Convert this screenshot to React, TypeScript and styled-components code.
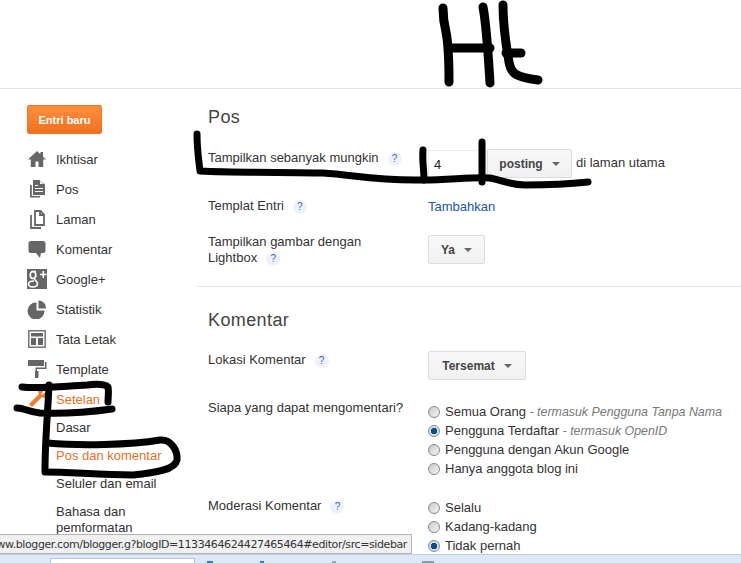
import React from 'react';
import styled, { createGlobalStyle } from 'styled-components';

const GlobalStyle = createGlobalStyle`
  html, body {
    margin: 0;
    padding: 0;
    background: #fff;
    overflow: hidden;
  }
  body {
    font-family: 'Liberation Sans', Arial, sans-serif;
    font-size: 13px;
    color: #333;
  }
`;

const Page = styled.div`
  position: relative;
  width: 741px;
  height: 563px;
  overflow: hidden;
  background: #fff;
`;

const TopBar = styled.header`
  height: 88px;
  border-bottom: 1px solid #e5e5e5;
`;

const Body = styled.div`
  display: flex;
`;

const Sidebar = styled.nav`
  width: 197px;
  flex-shrink: 0;
  padding: 16px 0 0 27px;
  box-sizing: border-box;
`;

const NewPost = styled.button`
  display: block;
  width: 75px;
  height: 29px;
  padding: 0;
  margin-bottom: 10px;
  border: 1px solid #f0762a;
  border-radius: 2px;
  background: linear-gradient(#fc8f3e, #f36f1f);
  color: #fff;
  font-family: inherit;
  font-size: 11px;
  font-weight: bold;
`;

const NavItem = styled.div<{ $active?: boolean }>`
  display: flex;
  align-items: center;
  height: 30px;
  color: ${p => (p.$active ? '#e8702a' : '#333')};
`;

const NavIcon = styled.svg`
  width: 20px;
  height: 20px;
  margin-right: 9px;
  flex-shrink: 0;
`;

const SubList = styled.div`
  padding-top: 6px;
`;

const SubItem = styled.div<{ $active?: boolean; $height?: number }>`
  padding-left: 29px;
  min-height: ${p => p.$height ?? 28}px;
  line-height: 16px;
  width: 110px;
  color: ${p => (p.$active ? '#e8702a' : '#333')};
`;

const Main = styled.main`
  flex: 1;
  padding-top: 18px;
`;

const Section = styled.section<{ $divider?: boolean; $top?: number }>`
  padding: ${p => p.$top ?? 0}px 0 20px 11px;
  border-bottom: ${p => (p.$divider ? '1px solid #e5e5e5' : '0')};
`;

const Heading = styled.h2<{ $mb: number }>`
  margin: 0 0 ${p => p.$mb}px;
  font-size: 18px;
  letter-spacing: 0.4px;
  line-height: 20px;
  font-weight: normal;
  color: #444;
`;

const Row = styled.div<{ $mb?: number }>`
  display: grid;
  grid-template-columns: 220px 1fr;
  margin-bottom: ${p => p.$mb ?? 0}px;
`;

const Label = styled.div`
  line-height: 16px;
  padding-top: 3px;
  width: 180px;
  white-space: nowrap;
`;

const Help = styled.span`
  display: inline-block;
  margin-left: 9px;
  width: 14px;
  height: 14px;
  border-radius: 50%;
  background: #eef3fa;
  color: #3f66b5;
  font-size: 10px;
  line-height: 14px;
  text-align: center;
`;

const Controls = styled.div<{ $top: number }>`
  display: flex;
  align-items: center;
  margin-top: ${p => p.$top}px;
`;

const NumberBox = styled.div`
  width: 59px;
  height: 28px;
  box-sizing: border-box;
  padding: 0 5px;
  line-height: 28px;
  border: 1px solid #eee;
  font-size: 13px;
  color: #222;
`;

const SelectButton = styled.div<{ $width: number }>`
  display: flex;
  align-items: center;
  justify-content: center;
  gap: 9px;
  width: ${p => p.$width}px;
  height: 29px;
  box-sizing: border-box;
  border: 1px solid #dcdcdc;
  border-radius: 2px;
  background: linear-gradient(#f8f8f8, #f1f1f1);
  font-size: 12px;
  font-weight: bold;
  color: #444;
`;

const Caret = styled.span`
  width: 0;
  height: 0;
  border-left: 4px solid transparent;
  border-right: 4px solid transparent;
  border-top: 4px solid #666;
`;

const Suffix = styled.span`
  margin: 0 0 3px 4px;
`;

const TextLink = styled.a`
  color: #2255aa;
  line-height: 16px;
  padding-top: 4px;
`;

const RadioList = styled.div<{ $top: number }>`
  display: flex;
  flex-direction: column;
  padding-top: ${p => p.$top}px;
`;

const RadioRow = styled.div`
  display: flex;
  align-items: center;
  height: 19px;
`;

const Radio = styled.span<{ $on?: boolean }>`
  width: 12px;
  height: 12px;
  margin-right: 5px;
  border-radius: 50%;
  box-sizing: border-box;
  border: 1px solid #8a8a8a;
  background: ${p =>
    p.$on
      ? 'radial-gradient(circle, #0e4f86 0 3px, #cfe0ee 3.5px)'
      : 'linear-gradient(135deg, #c9c9c9, #f4f4f4)'};
`;

const Hint = styled.em`
  color: #777;
  font-size: 12.4px;
`;

const StatusBar = styled.div`
  position: absolute;
  left: 0;
  top: 534px;
  width: 412px;
  height: 20px;
  box-sizing: border-box;
  border: 1px solid #b4b4b4;
  border-left: 0;
  background: #f0f0f0;
  overflow: hidden;
  display: flex;
  justify-content: flex-end;
  align-items: center;
  padding-right: 4px;
  white-space: nowrap;
  font-family: 'DejaVu Sans', sans-serif;
  font-size: 11px;
  letter-spacing: -0.4px;
  color: #333;
`;

const TaskBar = styled.div`
  position: absolute;
  left: 0;
  right: 0;
  top: 554px;
  height: 9px;
  box-sizing: border-box;
  background: #dde9f8;
  border-top: 1px solid #bccfe6;
`;

const TaskInput = styled.div`
  position: absolute;
  left: 50px;
  top: 3px;
  width: 143px;
  height: 8px;
  background: #fff;
  border: 1px solid #b4c2d2;
`;

const TaskMark = styled.span<{ $left: number; $width: number; $color: string }>`
  position: absolute;
  left: ${p => p.$left}px;
  top: 6px;
  width: ${p => p.$width}px;
  height: 4px;
  background: ${p => p.$color};
`;

const Scribbles = styled.svg`
  position: absolute;
  inset: 0;
  pointer-events: none;
`;

const HomeIcon = () => (
  <NavIcon viewBox="0 0 20 20"><path fill="#666" d="M10 2 1 10.500h2.800V18h4.700v-5.500h3V18h4.700v-7.500H19l-3-2.800V3h-2.600v2.300z" /></NavIcon>
);
const PostsIcon = () => (
  <NavIcon viewBox="0 0 20 20"><path fill="#666" fillRule="evenodd" d="M3 6h1.800v11H13v1.500H3zM6 1h6.500L18 5.500V16H6zm7 .8V5h3.600zM8 6v1h3V6zm0 3v1h8V9zm0 3v1h8v-1z" /></NavIcon>
);
const PagesIcon = () => (
  <NavIcon viewBox="0 0 20 20"><path fill="none" stroke="#666" strokeWidth="1.8" d="M8 2h5.500L17 5.500V16H8zM13 2v4h4M4 6v13h10" /></NavIcon>
);
const CommentIcon = () => (
  <NavIcon viewBox="0 0 20 20"><path fill="#666" d="M4 2h12a2.500 2.500 0 0 1 2.500 2.500v7A2.500 2.500 0 0 1 16 14h-2l-1 5-4-5H4a2.500 2.500 0 0 1-2.500-2.500v-7A2.500 2.500 0 0 1 4 2z" /></NavIcon>
);
const GPlusIcon = () => (
  <NavIcon viewBox="0 0 20 20">
    <path fill="#666" d="M0 0h20v20H0z" />
    <g fill="none" stroke="#fff" strokeWidth="1.600">
      <path d="M13 5.500h6.500M16.300 2v7" />
      <ellipse cx="6" cy="6" rx="2.800" ry="3.500" />
      <path d="M9 2.500H4.500M7.500 9.500c-1 1.300 3 2.500 3 5 0 2.300-2.500 3.500-5 3.500S1.500 16.800 1.500 15c0-1.800 2.300-3 5.500-3" />
    </g>
  </NavIcon>
);
const PieIcon = () => (
  <NavIcon viewBox="0 0 20 20"><path fill="#666" d="M9.500 3.500V11.500h8A8.500 8.500 0 1 1 9.500 3.500zM11.500 1.500a7.500 7.500 0 0 1 7.500 8h-7.500z" /></NavIcon>
);
const LayoutIcon = () => (
  <NavIcon viewBox="0 0 20 20">
    <path fill="none" stroke="#777" strokeWidth="1.500" d="M1.800 1.800h16.400v16.400H1.800z" />
    <path fill="#666" d="M4 4h12v3.500H4zM4 9h5v7H4zM11 9h5v7h-5z" />
  </NavIcon>
);
const RollerIcon = () => (
  <NavIcon viewBox="0 0 20 20"><path fill="#666" d="M1 1h16v6H1zM18 3h1.500v7H10v2H8.500V8.500H18zM8 12h3.500v7H8z" /></NavIcon>
);
const WrenchIcon = () => (
  <NavIcon viewBox="0 0 20 20"><path fill="#f07b2c" d="M2 15 12 5l-1-3 4-1 1 2-2 2 1 1 2-2 2 1-1 4-3-1L5 18z" /></NavIcon>
);

export default function App() {
  return (
    <Page>
      <GlobalStyle />
      <TopBar />
      <Body>
        <Sidebar>
          <NewPost>Entri baru</NewPost>
          <NavItem><HomeIcon />Ikhtisar</NavItem>
          <NavItem><PostsIcon />Pos</NavItem>
          <NavItem><PagesIcon />Laman</NavItem>
          <NavItem><CommentIcon />Komentar</NavItem>
          <NavItem><GPlusIcon />Google+</NavItem>
          <NavItem><PieIcon />Statistik</NavItem>
          <NavItem><LayoutIcon />Tata Letak</NavItem>
          <NavItem><RollerIcon />Template</NavItem>
          <NavItem $active><WrenchIcon />Setelan</NavItem>
          <SubList>
            <SubItem>Dasar</SubItem>
            <SubItem $active>Pos dan komentar</SubItem>
            <SubItem>Seluler dan email</SubItem>
            <SubItem $height={32}>Bahasa dan pemformatan</SubItem>
          </SubList>
        </Sidebar>
        <Main>
          <Section $divider>
            <Heading $mb={20}>Pos</Heading>
            <Row $mb={17}>
              <Label>Tampilkan sebanyak mungkin<Help>?</Help></Label>
              <Controls $top={2}>
                <NumberBox>4</NumberBox>
                <SelectButton $width={85}>posting <Caret /></SelectButton>
                <Suffix>di laman utama</Suffix>
              </Controls>
            </Row>
            <Row $mb={16}>
              <Label>Templat Entri<Help>?</Help></Label>
              <TextLink>Tambahkan</TextLink>
            </Row>
            <Row>
              <Label>Tampilkan gambar dengan<br />Lightbox<Help>?</Help></Label>
              <Controls $top={2}>
                <SelectButton $width={57}>Ya <Caret /></SelectButton>
              </Controls>
            </Row>
          </Section>
          <Section $top={23}>
            <Heading $mb={19}>Komentar</Heading>
            <Row $mb={17}>
              <Label>Lokasi Komentar<Help>?</Help></Label>
              <Controls $top={2}>
                <SelectButton $width={98}>Tersemat <Caret /></SelectButton>
              </Controls>
            </Row>
            <Row $mb={17}>
              <Label>Siapa yang dapat mengomentari?</Label>
              <RadioList $top={5}>
                <RadioRow><Radio />Semua Orang&nbsp;<Hint>- termasuk Pengguna Tanpa Nama</Hint></RadioRow>
                <RadioRow><Radio $on />Pengguna Terdaftar&nbsp;<Hint>- termasuk OpenID</Hint></RadioRow>
                <RadioRow><Radio />Pengguna dengan Akun Google</RadioRow>
                <RadioRow><Radio />Hanya anggota blog ini</RadioRow>
              </RadioList>
            </Row>
            <Row>
              <Label>Moderasi Komentar<Help>?</Help></Label>
              <RadioList $top={3}>
                <RadioRow><Radio />Selalu</RadioRow>
                <RadioRow><Radio />Kadang-kadang</RadioRow>
                <RadioRow><Radio $on />Tidak pernah</RadioRow>
              </RadioList>
            </Row>
          </Section>
        </Main>
      </Body>
      <StatusBar>www.blogger.com/blogger.g?blogID=1133464624427465464#editor/src=sidebar</StatusBar>
      <TaskBar>
        <TaskInput />
        <TaskMark $left={207} $width={6} $color="#3a78c8" />
        <TaskMark $left={260} $width={4} $color="#3a78c8" />
        <TaskMark $left={332} $width={4} $color="#9aa7b5" />
        <TaskMark $left={422} $width={12} $color="#8f9aa6" />
      </TaskBar>
      <Scribbles width="741" height="563" fill="none" stroke="#000" strokeLinecap="round" strokeLinejoin="round">
        <g strokeWidth="9">
          <path d="M443 8C443 18 444 24 446 32 448 42 449 50 449 82" />
          <path d="M483 7C486 22 488 50 490 83" />
          <path d="M449 48H490" />
          <path d="M503 5C503 25 506 45 509 62 511 74 516 77 538 80" />
          <path d="M506 53H521" />
        </g>
        <g strokeWidth="7">
          <path d="M197 134C197 150 199 162 200 171 240 173 290 172 323 173 355 175 375 181 423 180 450 180 470 177 490 178 505 181 510 185 525 185 550 185 570 184 588 182" />
          <path d="M423 150C422 160 424 170 424 180" />
          <path d="M482 142V182" />
          <path d="M22 387C40 389 65 386 87 385 95 384 105 384 108 387 109 392 108 397 108 402" />
          <path d="M17 408C25 408 28 412 40 413 65 414 90 412 112 409" />
          <path d="M49 385C48 410 45 440 45 470" />
          <path d="M47 443C80 446 130 445 160 440 172 439 178 452 177 460 175 470 155 473 133 475 100 475 70 472 45 472" />
        </g>
      </Scribbles>
    </Page>
  );
}
